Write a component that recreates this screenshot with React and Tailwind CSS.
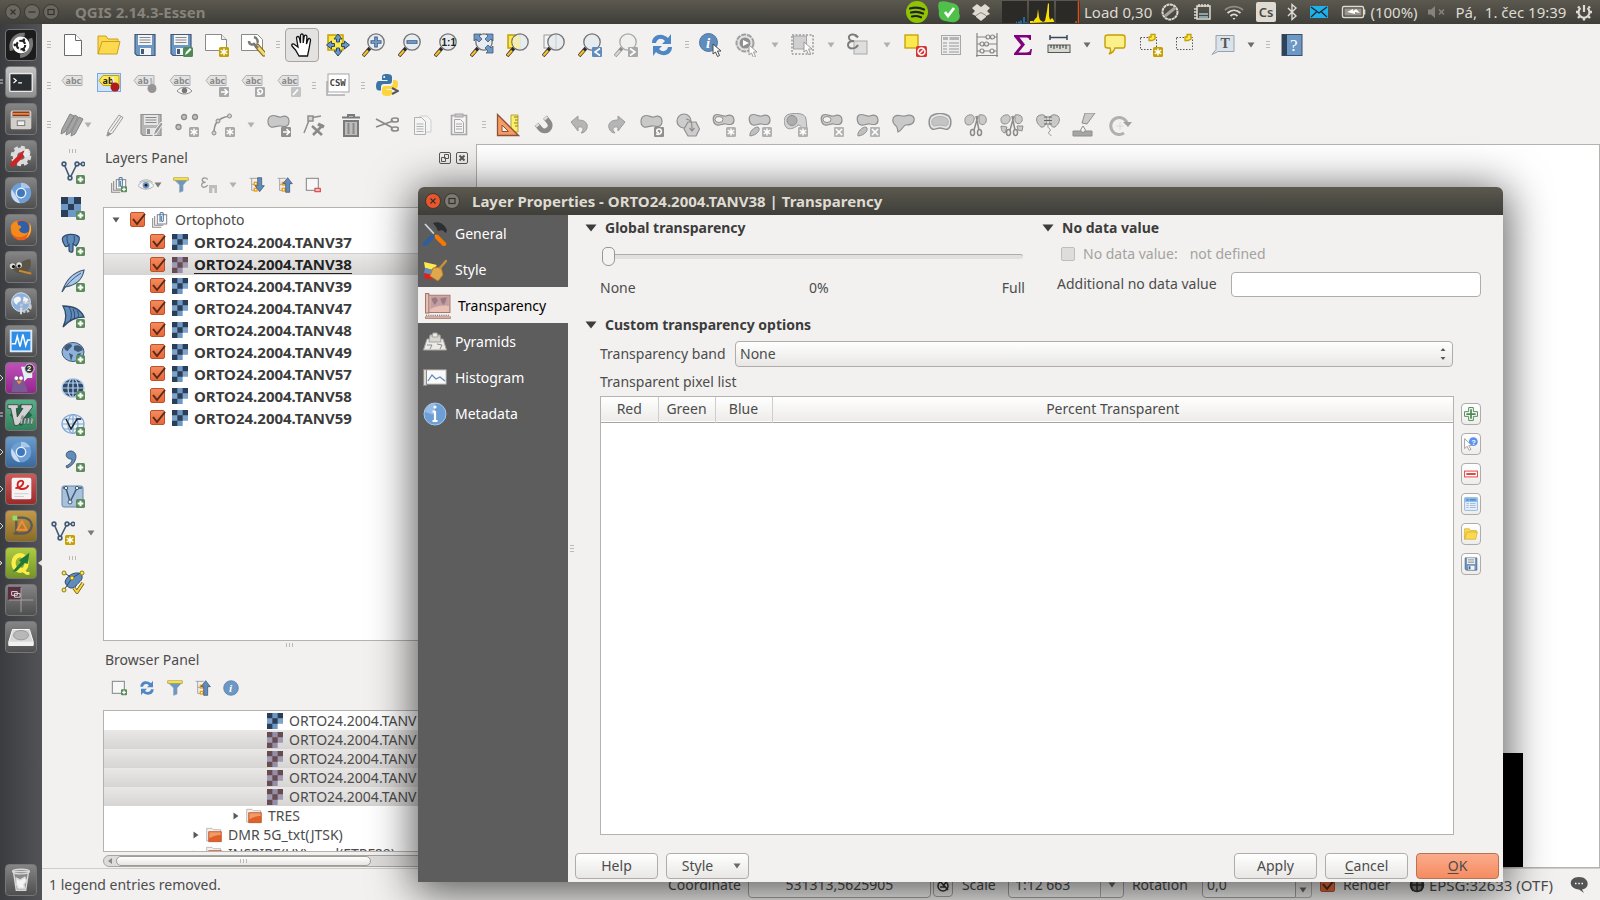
import React, { useState } from "react";

/* Shared icon parts, all on a 24x24 grid */

const PlusBadge = () => (
  <g>
    <rect x="15" y="14" width="9" height="9" rx="1.5" fill="#5a8c5a" />
    <path d="M19.5 15.7v5.6M16.7 18.5h5.6" stroke="#fff" strokeWidth="2" />
  </g>
);

const StarBadge = ({ fill = "#c4a000" }) => (
  <g>
    <rect x="14" y="14" width="10" height="10" rx="1.5" fill={fill} />
    <path d="M19 15.5v7M15.7 17.2l6.6 3.6M22.3 17.2l-6.6 3.6" stroke="#fff" strokeWidth="1.5" />
  </g>
);

const SquareBadge = ({ d, fill = "#a8a8a8" }) => (
  <g>
    <rect x="14" y="14" width="10" height="10" rx="1" fill={fill} />
    <path d={d} stroke="#fff" strokeWidth="1.6" fill="none" />
  </g>
);

const Blob = ({ small }) => (
  <path
    d={
      small
        ? "M3 2c4-2 7 2 11 1 5-2 8 0 8 4 0 5-4 5-8 4-3-1-6 2-9 1C1 11 0 4 3 2Z"
        : "M4 3c4-2 7 2 10 1 5-2 8 0 8 4 0 6-4 6-8 5-3-1-6 2-10 1C0 12 0 5 4 3Z"
    }
    fill="#c9c9c9"
    stroke="#8f8f8f"
    strokeWidth="1.2"
  />
);

const Lens = ({ gray, children }) => (
  <g>
    <path d="M1 23l7-8" stroke={gray ? "#8c8c8c" : "#2b2b2b"} strokeWidth="3.6" />
    <path d="M1.4 22.6l4.6-5.2" stroke={gray ? "#d8d8d8" : "#fcbf2a"} strokeWidth="2.2" />
    <circle cx="14" cy="9" r="8.2" fill={gray ? "#efefef" : "#e6ebf0"} fillOpacity="0.9" stroke={gray ? "#a8a8a8" : "#737373"} strokeWidth="1.3" />
    {children}
  </g>
);

const Tag = ({ text = "abc", fill = "#e3e3e3", color = "#8a8a8a", stroke = "#b0b0b0" }) => (
  <g>
    <path d="M1 7.5l4-5h16v10H5Z" fill={fill} stroke={stroke} />
    <text x="4.5" y="10.5" fontSize="9" fontWeight="700" fontFamily="Noto Sans, sans-serif" fill={color}>
      {text}
    </text>
  </g>
);

const Floppy = ({ fill = "#6d97c4", edge = "#415a75", plate = "#f4f4f4" }) => (
  <g>
    <path d="M2 1.5h20v21H4l-2-2Z" fill={fill} stroke={edge} strokeWidth="1.2" />
    <rect x="5" y="2" width="14" height="10" fill={plate} />
    <path d="M6.5 4.5h11M6.5 7h11M6.5 9.5h11" stroke="#8a8a8a" strokeWidth="1.2" />
    <rect x="7" y="15" width="11" height="7" fill={plate} />
    <rect x="8" y="16" width="3" height="5" fill={edge} />
  </g>
);

const Folder = () => (
  <g fill="#fcd94f" stroke="#c9a21c" strokeWidth="1">
    <path d="M1 21V3h8l2 3h10v4" />
    <path d="M1 21L5 8.500h18L20 21Z" />
  </g>
);

const Cursor = ({ x = 13, y = 11, gray }) => (
  <path
    transform={`translate(${x} ${y})`}
    d="M0 0v10l2.5-2 2 4.5 2-1-2-4.5H8Z"
    fill="#fff"
    stroke={gray ? "#9b9b9b" : "#4a4a4a"}
    strokeWidth="1"
  />
);

const Magnet = () => (
  <g fill="none" transform="rotate(140 13 12)">
    <path d="M8 18v-6a5.5 5.5 0 0 1 11 0v6" stroke="#8a8a8a" strokeWidth="5" />
    <path d="M8 18v-2.5M19 18v-2.5" stroke="#dcdcdc" strokeWidth="4" />
  </g>
);

const Scissors = () => (
  <g fill="none" stroke="#8a8a8a" strokeWidth="1.5">
    <path d="M12 3l3 14M14 3l-4 14" />
    <ellipse cx="8.5" cy="19.5" rx="2" ry="3" fill="#eee" />
    <ellipse cx="15.5" cy="19.5" rx="2" ry="3" fill="#eee" />
  </g>
);

const Raster = ({ dark = "#2b3e57", light = "#6d97c4" }) => (
  <g>
    <path d="M0 0h24v16h-8v8H0Z" fill={light} />
    <path d="M0 0h8v8H0ZM16 0h8v8h-8ZM8 8h8v8H8ZM0 16h8v8H0Z" fill={dark} />
    <path d="M0 8h8v8H0ZM16 8h8v8h-8Z" fill="#fff" fillOpacity="0.12" />
  </g>
);

const Nodes = () => (
  <g fill="#f2f1f0" stroke="#415a75" strokeWidth="1.6">
    <path d="M3 3l6 14L16 3h6" fill="none" />
    <circle cx="3" cy="3" r="1.9" />
    <circle cx="9" cy="17" r="1.9" />
    <circle cx="16" cy="3" r="1.9" />
    <circle cx="22" cy="3" r="1.7" />
  </g>
);

const Globe = ({ fill = "#9fc0e4", line = "#415a75" }) => (
  <g fill="none" stroke={line} strokeWidth="1.2">
    <ellipse cx="12" cy="11" rx="11" ry="9.5" fill={fill} />
    <ellipse cx="12" cy="11" rx="5" ry="9.5" />
    <path d="M1 11h22M3 6h18M3 16h18M12 1.5v19" />
  </g>
);

const Refresh = () => (
  <g fill="#4f86c6">
    <path d="M2 10C2 3 9 0 15 3c1 .5 2 1 3 2l3-4v10H12l3-3C11 4 7 6 6 10Z" />
    <path d="M22 14c0 7-7 10-13 7-1-.5-2-1-3-2l-3 4V13h9l-3 3c4 4 8 2 9-2Z" />
  </g>
);

const TreeLines = ({ children }) => (
  <g>
    <path d="M1 2h12M4 2v18h5M4 11h5" fill="none" stroke="#9a9a9a" strokeWidth="1.3" />
    <rect x="8" y="8" width="4" height="4" fill="#fff" stroke="#f59e0b" strokeWidth="2" />
    <rect x="8" y="17" width="4" height="4" fill="#fff" stroke="#f59e0b" strokeWidth="2" />
    {children}
  </g>
);

const Funnel = () => (
  <g>
    <path d="M1 3h22l-8 9v9l-5 2V12Z" fill="#6d97c4" stroke="#8a9bb0" />
    <path d="M1 1h22v4H1Z" fill="#fce94f" stroke="#a99a3a" />
  </g>
);

const InfoDot = () => (
  <g>
    <circle cx="12" cy="12" r="11" fill="#6d97c4" stroke="#4a76a8" />
    <text x="9" y="18" fontSize="17" fontWeight="700" fontStyle="italic" fontFamily="Liberation Serif, serif" fill="#fff">
      i
    </text>
  </g>
);

const Group = () => (
  <g fill="#fbfbfb" stroke="#8a8a8a" strokeWidth="1.6">
    <path d="M1 9v14h13" fill="none" />
    <path d="M4 6v14h13" fill="none" />
    <rect x="8" y="4" width="14" height="14" />
    <path d="M12 15V3c0-3 5-3 5 0v9c0 3-3 3-3 0V6" fill="none" stroke="#4f79a6" />
  </g>
);

const icons = {
  newFile: (
    <g fill="#fff" stroke="#6b6b6b">
      <path d="M3.5 1.5h11l6 6v15h-17Z" />
      <path d="M14.5 1.5v6h6" />
    </g>
  ),
  open: <Folder />,
  save: <Floppy />,
  saveAs: (
    <g>
      <Floppy />
      <rect x="14" y="14" width="10" height="10" rx="1.5" fill="#4e8a55" />
      <path d="M16 22l1-3 4-4 1.5 1.5-4 4Z" fill="#fff" />
    </g>
  ),
  composer: (
    <g>
      <path d="M.5 1.5h16l5 5v11H.5Z" fill="#fff" stroke="#8a8a8a" />
      <path d="M16.5 1.5v5h5" fill="#eee" stroke="#8a8a8a" />
      <StarBadge />
    </g>
  ),
  composerManager: (
    <g>
      <path d="M.5 1.5h16l5 5v11H.5Z" fill="#fff" stroke="#8a8a8a" />
      <path d="M16 13l7 8" stroke="#7a6520" strokeWidth="5" strokeLinecap="round" />
      <path d="M16 13l7 8" stroke="#f5d76a" strokeWidth="3" strokeLinecap="round" />
      <path d="M8 8c0 4 4 4 5 3l4 4M13 4c4 1 4 5 3 6" fill="none" stroke="#7a7a7a" strokeWidth="2.5" />
    </g>
  ),
  pan: (
    <path
      d="M9 23L5.5 17 2 13c-1-1.5 1-3 2.5-1.5L8 14 6.5 5c0-2 2.5-2 2.8 0L10.5 10V2.5c0-2 2.7-2 2.7 0V10l1-6.500c.3-2 2.8-1.6 2.7.3L16.5 11l1.5-4.5c.8-1.7 2.8-1 2.5.8L19 16l-1.5 7Z"
      fill="#fff"
      stroke="#111"
      strokeWidth="1.3"
    />
  ),
  panSelection: (
    <g>
      <rect x="2" y="2" width="15" height="15" fill="#fce94f" stroke="#c4a000" strokeWidth="1.5" />
      <path
        d="M12 1l4 5h-2.5v3h-3V6H8ZM12 23l4-5h-2.5v-3h-3v3H8ZM.5 12l5-4v2.5h3v3h-3V16ZM23.5 12l-5-4v2.5h-3v3h3V16Z"
        fill="#6d97c4"
        stroke="#2f4a68"
        strokeWidth="1"
      />
    </g>
  ),
  zoomIn: (
    <Lens>
      <path d="M14 3.5v11M8.5 9h11" stroke="#415f85" strokeWidth="3.6" />
      <path d="M14 4.5v9M9.5 9h9" stroke="#6d97c4" strokeWidth="2" />
    </Lens>
  ),
  zoomOut: (
    <Lens>
      <path d="M8.5 9h11" stroke="#415f85" strokeWidth="3.6" />
      <path d="M9.5 9h9" stroke="#6d97c4" strokeWidth="2" />
    </Lens>
  ),
  zoomNative: (
    <Lens>
      <text x="7.5" y="12.5" fontSize="10" fontWeight="700" fontFamily="Liberation Sans, sans-serif" fill="#222">
        1:1
      </text>
    </Lens>
  ),
  zoomFull: (
    <Lens>
      <path
        d="M4 1h7l-2 2 3 3-3 3-3-3-2 2ZM23 1h-7l2 2-3 3 3 3 3-3 2 2ZM23 20v-7l-2 2-3-3-3 3 3 3-2 2Z"
        fill="#6d97c4"
        stroke="#415a75"
        strokeWidth="0.8"
      />
    </Lens>
  ),
  zoomSelection: (
    <g>
      <rect x="2" y="2" width="12" height="13" fill="#fce94f" stroke="#c4a000" strokeWidth="1.5" />
      <Lens>
        <path d="M8 4h6v11H9C6 11 6 7 8 4Z" fill="#f5ecb0" />
      </Lens>
    </g>
  ),
  zoomLayer: (
    <g>
      <rect x="2" y="2" width="12" height="13" fill="#f4f4f4" stroke="#9a9a9a" />
      <Lens>
        <path d="M14 2v14" stroke="#cfcfcf" />
      </Lens>
    </g>
  ),
  zoomLast: (
    <g>
      <Lens />
      <SquareBadge d="M22 15.5l-5 3.5 5 3.5" fill="#5f8cbc" />
    </g>
  ),
  zoomNext: (
    <g>
      <Lens gray />
      <SquareBadge d="M16 15.5l5 3.5-5 3.5" />
    </g>
  ),
  refresh: <Refresh />,
  identify: (
    <g>
      <circle cx="9.5" cy="9.5" r="9" fill="#5f8cbc" stroke="#4a76a8" />
      <text x="7" y="15" fontSize="15" fontWeight="700" fontStyle="italic" fontFamily="Liberation Serif, serif" fill="#fff">
        i
      </text>
      <Cursor x={14} y={11} />
    </g>
  ),
  action: (
    <g>
      <circle cx="10" cy="10" r="8.5" fill="#e2e2e2" stroke="#a0a0a0" strokeWidth="2" strokeDasharray="5 1" />
      <circle cx="10" cy="10" r="5.5" fill="#8f8f8f" />
      <path d="M8 7l6 3-6 3Z" fill="#fff" />
      <Cursor x={14} y={12} gray />
    </g>
  ),
  select: (
    <g>
      <rect x="1" y="2" width="21" height="19" fill="none" stroke="#707070" strokeDasharray="2 1.5" />
      <rect x="2.5" y="3" width="13" height="13" fill="#d0d0d0" stroke="#a5a5a5" />
      <Cursor x={13} y={9} gray />
    </g>
  ),
  expression: (
    <g>
      <rect x="7" y="8" width="13" height="13" fill="#dedede" stroke="#a8a8a8" />
      <path d="M11 4C8 0 1 1 2 5c0 2 3 3 5 3-3 0-6 1-6 4 0 5 8 4 10 0M8 2.500l3 2" fill="none" stroke="#7c7c7c" strokeWidth="2" />
    </g>
  ),
  deselect: (
    <g>
      <rect x="2" y="2" width="13" height="13" fill="#fce94f" stroke="#c4a000" strokeWidth="1.3" />
      <rect x="13" y="13" width="11" height="11" rx="1.5" fill="#d83434" />
      <circle cx="18.5" cy="18.5" r="3.5" fill="none" stroke="#fff" strokeWidth="1.5" />
      <path d="M16 21l5-5" stroke="#fff" strokeWidth="1.5" />
    </g>
  ),
  table: (
    <g>
      <rect x="2.5" y="2.5" width="19" height="19" fill="#ededed" stroke="#a8a8a8" />
      <path d="M4 5.5h5M10.5 5.5h9.5" stroke="#b4b4b4" strokeWidth="3" />
      <path d="M4 10h4M10 10h10M4 13h4M10 13h10M4 16h4M10 16h10M4 19h4M10 19h10" stroke="#b4b4b4" strokeWidth="1.3" />
    </g>
  ),
  abacus: (
    <g fill="#f2f1f0" stroke="#858585" strokeWidth="1.2">
      <path d="M2 0v24M22 0v24M1 22.5h22M2 4h20M2 11h20M2 18h20" />
      <circle cx="13" cy="4" r="2" /><circle cx="17.5" cy="4" r="2" />
      <circle cx="7" cy="11" r="2" /><circle cx="11.5" cy="11" r="2" />
      <circle cx="7" cy="18" r="2" /><circle cx="17" cy="18" r="2" />
    </g>
  ),
  sigma: (
    <path d="M3 2h17v5h-1.5C18 5 17 4.5 14 4.500H8.5l5.5 7-6.5 8H15c3 0 4-1 4.5-3.500H21L20 22H3v-1.5l7-8.5-7-8.5Z" fill="#800080" />
  ),
  measure: (
    <g>
      <path d="M3 4.5h17M3 2v5M20 2v5" stroke="#34495e" strokeWidth="1.5" />
      <rect x="1" y="12" width="22" height="7.5" fill="#d5d9d0" stroke="#555" />
      <path d="M4 12v3M7 12v4M10 12v3M13 12v4M16 12v3M19 12v4" stroke="#333" />
    </g>
  ),
  tips: (
    <path d="M5 2h14c3 0 3 1 3 3v7c0 3-1 3-3 3h-7c-1 4-3 5-6 6 2-2 2-4 1-6H5c-3 0-3-1-3-3V5c0-2 0-3 3-3Z" fill="#fbf08a" stroke="#c4a000" strokeWidth="1.4" />
  ),
  newBookmark: (
    <g>
      <rect x="1.5" y="4.5" width="16" height="12" fill="none" stroke="#555" strokeDasharray="1.5 1.5" />
      <path d="M10 4h2V1.5h4V6l-3 1.5h-3Z" fill="#fce94f" stroke="#c4a000" strokeWidth="1.3" />
      <StarBadge />
    </g>
  ),
  bookmarks: (
    <g>
      <rect x="1.5" y="4.5" width="16" height="12" fill="none" stroke="#555" strokeDasharray="1.5 1.5" />
      <path d="M10 4h2V1.5h4V6l-3 1.5h-3Z" fill="#fce94f" stroke="#c4a000" strokeWidth="1.3" />
    </g>
  ),
  annotation: (
    <g>
      <path d="M5 2.5h18v16H7l-6 3 4-5Z" fill="#dae3ec" stroke="#9aa3ad" />
      <text x="9.5" y="15" fontSize="14" fontWeight="700" fontFamily="Liberation Serif, serif" fill="#555">
        T
      </text>
    </g>
  ),
  help: (
    <g>
      <rect x="2" y="1.5" width="20" height="21" fill="#6d97c4" stroke="#3a4f66" />
      <rect x="2" y="1.5" width="5" height="21" fill="#2f4256" />
      <text x="10" y="18" fontSize="17" fontFamily="Liberation Serif, serif" fill="#fff">
        ?
      </text>
    </g>
  ),
  label: <Tag />,
  pinLabels: (
    <g>
      <rect x="0.5" y="0.5" width="23" height="18" fill="#cfe3fa" stroke="#7aaae0" />
      <g transform="translate(1 0)">
        <Tag text="ab" fill="#fce94f" color="#222" stroke="#c4a000" />
      </g>
      <path d="M17 13l-1-9" stroke="#eee" strokeWidth="2" />
      <circle cx="18" cy="14" r="4.5" fill="#b01c1c" />
    </g>
  ),
  pin: (
    <g>
      <Tag text="ab" />
      <path d="M19 14l-1-9" stroke="#b5b5b5" strokeWidth="2" />
      <circle cx="19" cy="15.5" r="4.5" fill="#959595" />
    </g>
  ),
  showLabels: (
    <g>
      <Tag />
      <path d="M8 18c4-5 11-5 15 0-4 4-11 4-15 0Z" fill="#f5f5f5" stroke="#8a8a8a" />
      <circle cx="15.5" cy="17.5" r="2.7" fill="#777" />
    </g>
  ),
  moveLabel: (
    <g>
      <Tag />
      <SquareBadge d="M16 19h6M19.5 16l3 3-3 3" />
    </g>
  ),
  rotateLabel: (
    <g>
      <Tag />
      <SquareBadge d="M16 21c6 2 7-5 3-5-3 0-3 4 0 3.5" />
    </g>
  ),
  changeLabel: (
    <g>
      <Tag />
      <SquareBadge d="M16 22l5-5.5" fill="#c4c4c4" />
    </g>
  ),
  csw: (
    <g>
      <path d="M1 8v14h18" fill="#fff" stroke="#aaa" strokeWidth="1.5" />
      <rect x="2" y="1" width="21" height="18" fill="#fff" stroke="#a5a5a5" />
      <text x="3.5" y="13" fontSize="9" fontWeight="700" fontFamily="DejaVu Sans Mono, monospace" fill="#444">
        CSW
      </text>
    </g>
  ),
  python: (
    <g>
      <path d="M11.5 1C8 1 7 2 7 4v3h5.5v1H4C2 8 1 10 1 13s1 4.5 3 4.5h2V14c0-2 1-3 3-3h5c2 0 3-1 3-3V4c0-2-1.5-3-5.5-3Z" fill="#3b75a8" />
      <circle cx="9.2" cy="4" r="1" fill="#fff" />
      <path d="M12.5 23c3.5 0 4.5-1 4.5-3v-3h-5.5v-1H20c2 0 3-2 3-5s-1-4-3-4h-2v3c0 2-1 3-3 3h-5c-2 0-3 1-3 3v4c0 2 1.5 3 5.5 3Z" fill="#fcd53f" />
      <path d="M17 15l6 3-6 3" fill="none" stroke="#555" strokeWidth="2" />
    </g>
  ),
  pencil: (
    <g fill="#efefef" stroke="#9b9b9b">
      <path d="M4 23l1.5-6L16 2l4 2.500L9.5 20Z" />
      <path d="M7.5 18.5L18 3.5" />
      <path d="M4 23l1-4 3 2Z" fill="#8a8a8a" />
    </g>
  ),
  saveEdits: (
    <g>
      <Floppy fill="#b5b5b5" edge="#8f8f8f" plate="#e6e6e6" />
      <path d="M14 23l2-6 6-8 2 2-6 9Z" fill="#9a9a9a" stroke="#f2f1f0" />
    </g>
  ),
  addPoints: (
    <g>
      <g fill="#c2c2c2" stroke="#8c8c8c" strokeWidth="1.3">
        <circle cx="9" cy="4" r="2.5" /><circle cx="20" cy="4" r="2.5" /><circle cx="3.5" cy="14" r="2.5" />
      </g>
      <StarBadge fill="#a8a8a8" />
    </g>
  ),
  addCurve: (
    <g>
      <path d="M3 20C3 12 5 5 19 3" fill="none" stroke="#8f8f8f" strokeWidth="1.5" />
      <g fill="#d2d2d2" stroke="#8c8c8c">
        <circle cx="3" cy="20" r="2" /><circle cx="7" cy="8" r="2" /><circle cx="18.5" cy="3" r="2" />
      </g>
      <StarBadge fill="#a8a8a8" />
    </g>
  ),
  moveFeature: (
    <g>
      <Blob />
      <SquareBadge d="M16 19h6M19.5 16l3 3-3 3" fill="#8f8f8f" />
    </g>
  ),
  nodeTool: (
    <g stroke="#8f8f8f" strokeWidth="1.5" fill="#d2d2d2">
      <path d="M1 20L7 5l11-2" fill="none" />
      <rect x="5" y="3" width="5" height="5" />
      <path d="M9 13l10 9M20 12L10 22" strokeWidth="2.6" stroke="#8a8a8a" />
      <path d="M15 11l6 3" strokeWidth="3.5" stroke="#8a8a8a" />
    </g>
  ),
  trash: (
    <g fill="none" stroke="#7a7a7a" strokeWidth="2">
      <path d="M3 4.5h18M9 4V2h6v2" />
      <path d="M5 8h14v15H5Z" fill="#bcbcbc" />
      <path d="M9.5 10v11M14.5 10v11" stroke="#8a8a8a" />
    </g>
  ),
  cut: (
    <g fill="none" stroke="#8a8a8a" strokeWidth="1.7">
      <path d="M1 6l17 9M1 14l17-6" />
      <ellipse cx="20" cy="7" rx="3.5" ry="2" />
      <ellipse cx="20" cy="16" rx="3.5" ry="2" />
    </g>
  ),
  copy: (
    <g fill="#f4f4f4" stroke="#b0b0b0">
      <path d="M9 3h7l4 4v12H9Z" stroke="#cfcfcf" />
      <path d="M3.5 4.5h7l4 4v13h-11Z" />
      <path d="M5.5 11h7M5.5 13.5h7M5.5 16h7M5.5 18.5h7" />
    </g>
  ),
  paste: (
    <g fill="#f4f4f4" stroke="#a8a8a8">
      <rect x="4.5" y="2.5" width="15" height="19" strokeWidth="1.6" />
      <rect x="8" y="1" width="8" height="3" fill="#c8c8c8" />
      <path d="M7.5 6.5h6l3 3v10h-9ZM9 11h6M9 13.5h6M9 16h6" />
    </g>
  ),
  advanced: (
    <g>
      <path d="M15 2h7v17h-7Z" fill="#fbee6a" stroke="#b8a53c" />
      <path d="M18 4h4M19 7h3M18 10h4M19 13h3" stroke="#8a7a20" />
      <path d="M1.5 1.5l21 21h-21Z" fill="#f79a63" stroke="#8a5236" strokeWidth="1.3" />
      <path d="M6 12l6.5 6.500H6Z" fill="#f2f1f0" stroke="#8a5236" />
    </g>
  ),
  snap: <Magnet />,
  undo: <path d="M3 9l7-6v4c8 0 10 4 9 8-1 3-3 5-6 5 3-3 3-7-3-6v4Z" fill="#b5b5b5" stroke="#9b9b9b" />,
  redo: <path d="M21 9l-7-6v4c-8 0-10 4-9 8 1 3 3 5 6 5-3-3-3-7 3-6v4Z" fill="#b5b5b5" stroke="#9b9b9b" />,
  rotateFeature: (
    <g>
      <Blob />
      <SquareBadge d="M16 21c6 2 7-5 3-5-3 0-3 4 0 3.5" fill="#8f8f8f" />
    </g>
  ),
  simplify: (
    <g fill="#cdcdcd" stroke="#8f8f8f" strokeWidth="1.2">
      <circle cx="8" cy="8" r="7" />
      <path d="M12 9h8l3.5 7-3.5 7h-8l-4-7Z" />
      <path d="M10 6c6 1 6 4 6 11M13.5 15l2.5 3 2.5-3" fill="none" />
    </g>
  ),
  addRing: (
    <g>
      <Blob small />
      <ellipse cx="7" cy="6.5" rx="4" ry="3" fill="#f2f1f0" stroke="#8f8f8f" />
      <StarBadge fill="#b0b0b0" />
    </g>
  ),
  addPart: (
    <g>
      <Blob small />
      <path d="M2 23c-1-4 4-9 8-9 3 2 0 8-8 9Z" fill="#c0c0c0" stroke="#8f8f8f" />
      <StarBadge fill="#b0b0b0" />
    </g>
  ),
  fillRing: (
    <g>
      <path d="M3 2c7-3 19-2 19 4l1 10c-5 2-5-4-9-4-4 4-10 5-12 2C-1 10 0 4 3 2Z" fill="#d2d2d2" stroke="#9b9b9b" />
      <circle cx="8" cy="7.5" r="5" fill="#adadad" stroke="#8f8f8f" />
      <StarBadge fill="#b0b0b0" />
    </g>
  ),
  deleteRing: (
    <g>
      <Blob small />
      <ellipse cx="7" cy="6.5" rx="4" ry="3" fill="#f2f1f0" stroke="#8f8f8f" />
      <SquareBadge d="M16 16l6 6M22 16l-6 6" fill="#b5b5b5" />
    </g>
  ),
  deletePart: (
    <g>
      <Blob small />
      <path d="M2 23c-1-4 4-9 8-9 3 2 0 8-8 9Z" fill="#c0c0c0" stroke="#8f8f8f" />
      <SquareBadge d="M16 16l6 6M22 16l-6 6" fill="#b5b5b5" />
    </g>
  ),
  reshape: (
    <path d="M3 3c4-2 7 1 10 0 6-2 10 0 9 5-1 4-5 4-8 4-3 0-4 6-8 7-1-4 0-5-3-7-3-3-3-7 0-9Z" fill="#c9c9c9" stroke="#8f8f8f" strokeWidth="1.2" />
  ),
  offset: (
    <g stroke="#8f8f8f" fill="#e4e4e4">
      <path d="M5 2c4-2 10-2 14 0 5 2 5 11 1 14-3 1-5-1-8-1s-5 2-8 1C0 13 0 4 5 2Z" strokeWidth="1.4" />
      <path d="M6 5c4-2 8-2 12 0 3 1 3 7 0 8-2 0-4-1-6-1s-4 1-6 1C3 12 3 6 6 5Z" fill="#c4c4c4" stroke="#b0b0b0" />
    </g>
  ),
  split: (
    <g>
      <path d="M3 3c5-3 8 0 7 4-1 5-6 6-8 4-2-3-1-7 1-8ZM15 2c6-1 8 2 7 7-2 4-6 3-7 0Z" fill="#c9c9c9" stroke="#8f8f8f" />
      <Scissors />
    </g>
  ),
  splitParts: (
    <g>
      <path d="M3 3c5-3 8 0 7 4-1 4-6 5-8 3-2-3-1-6 1-7ZM15 2c6-1 8 2 7 6-2 4-6 3-7 0ZM1 13l6 1-2 6c-3 0-4-4-4-7ZM17 13l6 0-1 5-4-1Z" fill="#c9c9c9" stroke="#8f8f8f" />
      <Scissors />
    </g>
  ),
  merge: (
    <g fill="#c9c9c9" stroke="#8f8f8f">
      <path d="M2 3c5-3 9 0 9 4s-3 8-6 7C1 11-1 6 2 3ZM22 3c-5-3-9 0-9 4s3 8 6 7c4-3 6-8 3-11Z" />
      <path d="M8 4h8M8 7.5h8M8 11h8" stroke="#666" />
      <path d="M12 12c-1 5 5 3 1 7-2 2 2 2 2 4" fill="none" />
    </g>
  ),
  mergeAttributes: (
    <g fill="#c9c9c9" stroke="#8f8f8f">
      <path d="M1 18h19v5H1Z" fill="#a5a5a5" />
      <path d="M10 10l3-10h10l-8 11Z" />
      <path d="M11 13l2.5 4-2.5 3-2.5-3Z" fill="#f4f4f4" />
    </g>
  ),
  rotateSymbols: (
    <g>
      <path d="M16 20a8.5 8.5 0 1 1 3.5-9" fill="none" stroke="#b0b0b0" strokeWidth="3" />
      <path d="M15 9h9l-4 5Z" fill="#a0a0a0" />
      <path d="M12 9v8M8 13h8" stroke="#dadada" />
    </g>
  ),
  vector: (
    <g>
      <Nodes />
      <PlusBadge />
    </g>
  ),
  raster: (
    <g>
      <path d="M0 0h20v20H0Z" fill="#6d97c4" />
      <path d="M0 0h7v7H0ZM13 0h7v7h-7ZM7 7h6v6H7ZM0 13h7v7H0Z" fill="#2b3e57" />
      <PlusBadge />
    </g>
  ),
  postgis: (
    <g>
      <path d="M2 4c3-3 12-4 16 0 1 3-1 7-3 9l-3-2v6c0 3-4 3-4 0v-5c-2 2-3 2-4 1C2 10 0 7 2 4Z" fill="#5f8cbc" stroke="#2f4a68" strokeWidth="1.2" />
      <path d="M6 3c0 4 0 7 2 9M13 3c1 4 0 6-1 8" fill="none" stroke="#2f4a68" />
      <PlusBadge />
    </g>
  ),
  spatialite: (
    <g>
      <path d="M1 23C4 14 9 4 23 1c-1 8-7 15-19 17Z" fill="#a9c8ea" stroke="#415a75" strokeWidth="1.2" />
      <path d="M1 23C6 15 12 9 20 4" fill="none" stroke="#415a75" />
      <PlusBadge />
    </g>
  ),
  mssql: (
    <g>
      <path d="M2 1c10 0 18 4 21 11-8 0-15 3-21 10 4-8 4-14 0-21Z" fill="#5f8cbc" stroke="#2f4a68" strokeWidth="1.3" />
      <path d="M8 2c3 5 3 9 1 14M12 4c2 4 2 7 1 10M16 6c2 3 2 4 1 6" fill="none" stroke="#2f4a68" />
      <PlusBadge />
    </g>
  ),
  wms: (
    <g>
      <ellipse cx="12" cy="11" rx="11" ry="9.5" fill="#8db3dd" stroke="#415a75" />
      <path d="M3 7c2-4 6-5 8-3 0 3-3 3-4 6-2 0-3-1-4-3ZM13 5c4-2 8 0 9 4l-5 2-4-2ZM8 12l4 2-2 6ZM16 13l4-1-2 5Z" fill="#415a75" />
      <PlusBadge />
    </g>
  ),
  wcs: (
    <g>
      <Globe fill="#2f4a68" line="#b9d2ee" />
      <PlusBadge />
    </g>
  ),
  wfs: (
    <g>
      <Globe fill="#e8f0f9" line="#7fa6d2" />
      <path d="M5 6l5 10L16 6h4" fill="none" stroke="#222" strokeWidth="1.5" />
      <PlusBadge />
    </g>
  ),
  csv: (
    <g>
      <path d="M5 17c5-2 6-5 6-7-7 1-8-8-1-8 8 1 6 13-4 17Z" fill="#5f8cbc" stroke="#415a75" />
      <PlusBadge />
    </g>
  ),
  virtual: (
    <g>
      <rect x="1" y="1" width="21" height="21" rx="2" fill="#a8c2de" stroke="#6a86a5" />
      <path d="M2 3h3l4 14L16 3h5" fill="none" stroke="#415a75" strokeWidth="1.5" />
      <g fill="#f2f1f0" stroke="#415a75">
        <circle cx="5" cy="3" r="1.7" /><circle cx="16" cy="3" r="1.7" /><circle cx="9" cy="17" r="2" />
      </g>
      <PlusBadge />
    </g>
  ),
  newVector: (
    <g>
      <Nodes />
      <StarBadge />
    </g>
  ),
  topology: (
    <g>
      <path d="M4 12C6 3 20 0 21 6c1 5-4 6-6 10-4 4-9 2-11-4Z" fill="#5f8cbc" stroke="#2f4a68" />
      <path d="M2 2l9 6 10-6M11 8L3 20" fill="none" stroke="#2f4a68" />
      <g fill="#fce94f" stroke="#8a7a20">
        <circle cx="3" cy="3" r="2" /><circle cx="21" cy="3" r="2" /><circle cx="11" cy="8" r="2" /><circle cx="3" cy="20" r="2" />
      </g>
      <path d="M13 18l3 4 6-9" fill="none" stroke="#6b5a10" strokeWidth="3.5" />
      <path d="M13 18l3 4 6-9" fill="none" stroke="#fcd53f" strokeWidth="2" />
    </g>
  ),
  group: <Group />,
  addGroup: (
    <g>
      <Group />
      <PlusBadge />
    </g>
  ),
  eye: (
    <g>
      <path d="M0 13C6 4 18 4 24 13 18 20 6 20 0 13Z" fill="#f4f4f4" stroke="#a5a5a5" strokeWidth="1.3" />
      <path d="M2 8C8 3 16 3 22 8" fill="none" stroke="#a5a5a5" strokeWidth="1.3" />
      <circle cx="12" cy="12.5" r="5" fill="#6d97c4" />
      <circle cx="12" cy="12.5" r="2.2" fill="#222" />
    </g>
  ),
  funnel: <Funnel />,
  epsilonFilter: (
    <g>
      <path d="M10 4C8 0 1 1 2 5c0 2 3 3 5 3-3 0-6 1-6 4 0 5 7 4 9 0" fill="none" stroke="#9b9b9b" strokeWidth="2" />
      <path d="M12 12h12v12h-4v-7h-3v7h-5Z" fill="#bdbdbd" />
    </g>
  ),
  expandAll: (
    <TreeLines>
      <path d="M13 1h6v12h4l-7 9-7-9h4Z" fill="#5f8cbc" stroke="#2f4a68" />
    </TreeLines>
  ),
  collapseAll: (
    <TreeLines>
      <path d="M13 23h6V10h4l-7-9-7 9h4Z" fill="#5f8cbc" stroke="#2f4a68" />
    </TreeLines>
  ),
  removeLayer: (
    <g>
      <rect x="2" y="2" width="18" height="18" fill="#f7f7f7" stroke="#8a8a8a" strokeWidth="1.6" />
      <rect x="14" y="16" width="10" height="7" rx="1" fill="#e05252" />
      <path d="M16 19.5h6" stroke="#fff" strokeWidth="2" />
    </g>
  ),
  addLayer: (
    <g>
      <rect x="2" y="2" width="18" height="18" fill="#f7f7f7" stroke="#8a8a8a" strokeWidth="1.6" />
      <PlusBadge />
    </g>
  ),
  info: <InfoDot />,
  rasterLayer: <Raster />,
  rasterSelected: <Raster dark="#664c50" light="#958ea8" />,
  browserFolder: (
    <g>
      <path d="M1 21V2h8l2 2h11v17Z" fill="#f4f1ee" stroke="#a5a09a" />
      <path d="M4 7h19v15H4Z" fill="#e0622a" stroke="#b8441a" />
      <path d="M5 8h17v4c-7 0-12 2-17 5Z" fill="#f29a68" />
    </g>
  ),
  addRow: (
    <g fill="none">
      <path d="M8 1h8v7h7v8h-7v7H8v-7H1V8h7Z" stroke="#4e8a55" strokeWidth="1.7" fill="#fff" />
      <path d="M12 4v16M4 12h16" stroke="#4e8a55" strokeWidth="3" />
    </g>
  ),
  pickRow: (
    <g>
      <circle cx="16" cy="8" r="7.5" fill="#5b8ff0" />
      <text x="12.5" y="13" fontSize="13" fontWeight="700" fontFamily="Liberation Sans, sans-serif" fill="#fff">
        ?
      </text>
      <path d="M1 3v17l4-4 4 7 3-2-4-6 5-1Z" fill="#fff" stroke="#8a8a8a" strokeWidth="1.3" />
    </g>
  ),
  removeRow: (
    <g>
      <rect x="1" y="7" width="22" height="10" fill="#fff" stroke="#e04848" strokeWidth="1.7" />
      <path d="M4 12h16" stroke="#e04848" strokeWidth="3.5" />
    </g>
  ),
  defaultRows: (
    <g>
      <rect x="1" y="1" width="22" height="22" rx="1" fill="#e6f0fa" stroke="#8db3dd" strokeWidth="1.5" />
      <path d="M1 5h22" stroke="#8dbbe8" strokeWidth="7" />
      <path d="M4 5h4M10 5h10" stroke="#4a7db0" strokeWidth="2" />
      <path d="M4 11h4M10 11h10M4 14.5h4M10 14.5h10M4 18h4M10 18h10" stroke="#9ab8d8" strokeWidth="1.6" />
    </g>
  ),
  general: (
    <g>
      <path d="M2 2l12 13" stroke="#d0d4d8" strokeWidth="1.8" />
      <path d="M14 15l7 7" stroke="#f57900" strokeWidth="4.5" strokeLinecap="round" />
      <path d="M17 7L9 15" stroke="#6a5a4a" strokeWidth="2" />
      <path d="M9 15l-7 7" stroke="#2f5e9e" strokeWidth="4.5" strokeLinecap="round" />
      <path d="M10 1c5-2 11 0 14 7l-1 3-4-3-4 1-2-4Z" fill="#2b2f33" />
    </g>
  ),
  style: (
    <g>
      <path d="M1 4l13 3-4 5-8-2Z" fill="#fce94f" />
      <path d="M2 10l9 2-3 5-7-2Z" fill="#5f8cbc" />
      <path d="M1 15l9 2 3 4-11 0Z" fill="#e02020" />
      <path d="M10 10l8-1 2 8-5 6-8-5Z" fill="#e0a84e" stroke="#b27a2a" />
      <path d="M17 10l6-7" stroke="#c98f3a" strokeWidth="2.5" strokeLinecap="round" />
    </g>
  ),
  transparency: (
    <g>
      <path d="M2 2h21v16H2Z" fill="#e8bfb2" stroke="#a5776c" />
      <path d="M5 3h17v9c-7-1-12 0-17 3Z" fill="#a5889a" fillOpacity="0.6" />
      <path d="M6 5l4-1 2 3-3 4-2-3ZM14 5l6-1-1 4-2 3-2-3Z" fill="#8c6a72" fillOpacity="0.7" />
      <rect x="0.5" y="0.5" width="3" height="18" fill="#e8c4b8" stroke="#a5776c" />
      <path d="M1 20.5h22" stroke="#555" strokeDasharray="1 1" />
      <rect x="0.5" y="22" width="23" height="1.5" fill="#e8bfb2" stroke="#a5776c" strokeWidth="0.7" />
    </g>
  ),
  pyramids: (
    <g fill="#eceae6" stroke="#a5a5a0">
      <path d="M4 9h16l3.5 11H.5Z" />
      <path d="M7 5h10l1 7H6Z" fill="#d8d6d0" />
      <path d="M10 3h4l1 4H9Z" />
      <path d="M4 15h5l-2 4M14 14l5 1-2 4" fill="none" stroke="#8c8c88" />
    </g>
  ),
  histogram: (
    <g>
      <rect x="2" y="4" width="21" height="14" fill="#fafafa" stroke="#c4c4c0" />
      <rect x="0.5" y="3.5" width="3" height="16" fill="#d8d8d4" stroke="#8c8c88" />
      <path d="M5 15l4-6 4 4 4-2 5 4" fill="none" stroke="#5f8cbc" strokeWidth="1.3" />
    </g>
  ),
  metadata: (
    <g>
      <circle cx="12" cy="12" r="11" fill="#6d9fd6" stroke="#a9c8ea" />
      <path d="M2 10C3 4 8 1 12 1v12C8 12 5 11 2 10Z" fill="#a9c8ea" fillOpacity="0.7" />
      <path d="M12 9v10M9.5 9.500H12M9.5 19h5" stroke="#fff" strokeWidth="2.2" fill="none" />
      <circle cx="12" cy="5" r="1.6" fill="#fff" />
    </g>
  ),
};

const Icon = ({ name, className = "size-6" }) => (
  <svg viewBox="0 0 24 24" className={`${className} shrink-0`} aria-hidden="true">
    {icons[name]}
  </svg>
);

const Arrow = ({ className = "text-[#8f8f8f]" }) => (
  <svg viewBox="0 0 8 6" className={`w-2 h-1.5 shrink-0 ${className}`} aria-hidden="true">
    <path d="M0.5 0.5h7L4 5.5Z" fill="currentColor" />
  </svg>
);

const Grip = ({ vertical }) => (
  <span className={vertical ? "flex gap-0.5 justify-center" : "flex flex-col gap-0.5 w-[13px] items-center"}>
    {[0, 1, 2].map((i) => (
      <i key={i} className={vertical ? "w-px h-1 bg-[#bdbab6]" : "h-px w-1 bg-[#bdbab6]"} />
    ))}
  </span>
);

const ToolBar = ({ items, height = "h-10" }) => (
  <div className={`flex items-center ${height}`} role="toolbar">
    {items.map((item, i) => {
      if (item === "|") return <Grip key={i} />;
      if (item === "v" || item === "V")
        return (
          <button key={i} aria-label="More" className="w-5 h-9 flex items-center justify-center">
            <Arrow className={item === "V" ? "text-[#6b6b6b]" : "text-[#b0b0b0]"} />
          </button>
        );
      if (item === "pencils")
        return (
          <button key={i} aria-label={item} className="w-[42px] h-9 flex items-center pl-[5px]">
            <svg viewBox="0 0 24 24" className="size-6 shrink-0">
              <g fill="#a5a5a5" stroke="#858585">
                <path d="M1 21l1-5L10 1l4 2L5 19Z" />
                <path d="M6 22l1-5L15 2l3 2L10 20Z" />
                <path d="M11 23l1-5L19 4l4 2-8 15Z" />
              </g>
            </svg>
            <Arrow className="text-[#b0b0b0]" />
          </button>
        );
      return (
        <button
          key={i}
          aria-label={item}
          className={
            item === "pan"
              ? "w-[34px] h-[34px] mx-px flex items-center justify-center rounded-sm border border-[#a8a5a1] bg-[#e4e2e0]"
              : "w-9 h-9 flex items-center justify-center"
          }
        >
          <Icon name={item} />
        </button>
      );
    })}
  </div>
);

const fileBar = [
  "|", "newFile", "open", "save", "saveAs", "composer", "composerManager",
  "|", "pan", "panSelection", "zoomIn", "zoomOut", "zoomNative", "zoomFull", "zoomSelection", "zoomLayer", "zoomLast", "zoomNext", "refresh",
  "|", "identify", "action", "v", "select", "v", "expression", "v", "deselect", "table", "abacus", "sigma", "measure", "V",
  "tips", "newBookmark", "bookmarks", "annotation", "V", "|", "help",
];
const labelBar = ["|", "label", "pinLabels", "pin", "showLabels", "moveLabel", "rotateLabel", "changeLabel", "|", "csw", "|", "python"];
const editBar = [
  "|", "pencils", "pencil", "saveEdits", "addPoints", "addCurve", "v", "moveFeature", "nodeTool", "trash", "cut", "copy", "paste",
  "|", "advanced", "snap", "undo", "redo", "rotateFeature", "simplify", "addRing", "addPart", "fillRing", "deleteRing", "deletePart",
  "reshape", "offset", "split", "splitParts", "merge", "mergeAttributes", "rotateSymbols",
];
const layerBar = ["vector", "raster", "postgis", "spatialite", "mssql", "wms", "wcs", "wfs", "csv", "virtual"];
const layers = ["37", "38", "39", "47", "48", "49", "57", "58", "59"];

/* Window buttons */
const WinButton = ({ kind, tone }) => (
  <button aria-label={kind} className="size-4">
    <svg viewBox="0 0 16 16" className="size-4">
      <circle cx="8" cy="8" r="7.5" fill={tone === "red" ? "#e9562d" : tone === "mid" ? "#7c7a72" : "#6a6860"} stroke="#3a3934" />
      <g stroke="#33322e" strokeWidth="1.2" fill="none">
        {kind === "close" && <path d="M5.5 5.5l5 5M10.5 5.5l-5 5" />}
        {kind === "minimize" && <path d="M4.5 8h7" />}
        {kind === "maximize" && <rect x="5" y="5.5" width="6" height="5" />}
      </g>
    </svg>
  </button>
);

const TopBar = () => (
  <header className="h-6 flex items-center bg-linear-to-b from-[#5b594f] to-[#3f3e39] text-[15px] leading-6 text-[#dfdbd2]">
    <div className="flex gap-[3px] pl-[5px]">
      <WinButton kind="close" />
      <WinButton kind="minimize" />
      <WinButton kind="maximize" />
    </div>
    <h1 className="pl-4 font-bold text-[15px] text-[#87837a]">QGIS 2.14.3-Essen</h1>
    <div className="ml-auto flex items-center h-6 whitespace-pre">
      <svg viewBox="0 0 32 24" className="w-8 h-6">
        <circle cx="16" cy="12" r="11" fill="#8fc400" />
        <path d="M9 8.5c5-1.5 10-1 14 1M10 12.5c4-1 8-1 12 1M11 16.5c3-1 6-.5 9 .8" stroke="#222" strokeWidth="2.2" fill="none" strokeLinecap="round" />
      </svg>
      <svg viewBox="0 0 32 24" className="w-8 h-6">
        <path d="M6 2c5-2 9 0 13 1 6 1 8 5 7 10 2 4 0 8-4 9-4 1-7-1-10-1-5-1-7-5-6-10-1-3-1-7 0-9Z" fill="#4fc04a" />
        <path d="M12 12l3 4 6-8" stroke="#fff" strokeWidth="2.8" fill="none" />
      </svg>
      <svg viewBox="0 0 32 24" className="w-8 h-6">
        <path d="M12 4l4 3 4-3 5 4-3 3 3 3-4 2v1l-5 4-5-4v-1l-4-2 3-3-3-3Z" fill="#dfdbd2" />
        <path d="M11 15.5l5-3 5 3" stroke="#8a877e" fill="none" />
      </svg>
      <svg viewBox="0 0 85 24" className="w-[85px] h-6">
        <path d="M5 1h25v22H5ZM32 1h25v22H32ZM59 1h24v22H59Z" fill="#2b2a26" />
        <path d="M19 22.5h1M21 22.5h2M24 20.5v3M27 17v6M29 22v1" stroke="#1c7fd0" strokeWidth="1.5" />
        <path d="M33 23v-2h3v1l2-3 2-2 1-8 1 8 1 3 3 2 2-1 2-10 1-8 1 1v12l1 4 2-2 1 1 1 2v1Z" fill="#fce100" />
        <path d="M79 23v-2M81.5 23V1" stroke="#d6501e" strokeWidth="1.5" />
      </svg>
      <span className="w-[72px] pl-0.5">Load 0,30</span>
      <svg viewBox="0 0 32 24" className="w-8 h-6" fill="none" stroke="#dfdbd2">
        <circle cx="16" cy="12" r="7.5" strokeWidth="2" strokeDasharray="3 0.5" />
        <path d="M11 16l10-8" strokeWidth="3" stroke="#a8a59c" />
      </svg>
      <svg viewBox="0 0 32 24" className="w-8 h-6" fill="none" stroke="#dfdbd2" strokeWidth="1.5">
        <path d="M11 6h13v13H11ZM13 4v3M16 4v3M19 4v3M22 4v3M8 9h3M8 12h3M8 15h3M8 18h3" />
        <path d="M13 14h9M13 17h9" stroke="#9fc4c8" />
      </svg>
      <svg viewBox="0 0 32 24" className="w-8 h-6" fill="none" stroke="#dfdbd2" strokeWidth="1.8">
        <path d="M7 10c5-4.5 13-4.5 18 0" stroke="#8f8c84" />
        <path d="M9.5 13c4-3.5 9-3.5 13 0M12.5 16c2-2 5-2 7 0" />
        <path d="M14.5 18h3L16 20Z" fill="#dfdbd2" stroke="none" />
      </svg>
      <span className="w-8 flex justify-center">
        <b className="w-5 h-5 rounded-xs bg-[#dfdbd2] text-[#4a4944] text-[13px] leading-5 text-center font-semibold">Cs</b>
      </span>
      <svg viewBox="0 0 20 24" className="w-5 h-6" fill="none" stroke="#dfdbd2" strokeWidth="1.4">
        <path d="M6 8l8 8-4 3.500V4.500L14 8l-8 8" />
      </svg>
      <svg viewBox="0 0 34 24" className="w-[34px] h-6">
        <rect x="8" y="6" width="18" height="12" fill="#1fb0ea" />
        <path d="M9 7l8 6 8-6M9 17l5.5-5M25 17l-5.5-5" stroke="#222" fill="none" strokeWidth="1.2" />
      </svg>
      <svg viewBox="0 0 34 24" className="w-[34px] h-6">
        <rect x="6.5" y="6.5" width="21" height="11" rx="1.5" fill="none" stroke="#dfdbd2" strokeWidth="1.4" />
        <path d="M28.5 9.5v5" stroke="#dfdbd2" strokeWidth="1.6" />
        <rect x="8.5" y="8.5" width="17" height="7" fill="#98958c" />
        <path d="M11 12l6-3v2l3-2 4 4-5-1v2Z" fill="#fff" />
      </svg>
      <span className="w-12 text-center">(100%)</span>
      <svg viewBox="0 0 36 24" className="w-9 h-6" fill="#86837a">
        <path d="M10 9.5h3l4-3.5v12l-4-3.5h-3Z" />
        <path d="M21 9.5l5 5M26 9.5l-5 5" stroke="#86837a" strokeWidth="1.6" />
      </svg>
      <span className="w-[114px] text-center">Pá,  1. čec 19:39</span>
      <svg viewBox="0 0 32 24" className="w-8 h-6" fill="none" stroke="#dfdbd2">
        <path d="M19.5 8a5.5 5.5 0 1 1-7 0M16 5v7" strokeWidth="2.2" />
        <path d="M8 12h2M22 12h2M10 6.5l1.5 1.5M22 6.5L20.5 8M10 18l1.5-1.5M22 18l-1.5-1.5M16 18v2.5" strokeWidth="2.4" />
      </svg>
    </div>
  </header>
);

const gray = "bg-linear-to-b from-[#858585] to-[#4f4f4f]";
const chromium = (
  <g>
    <circle cx="16" cy="16" r="11" fill="#6d9fd6" />
    <path d="M16 5a11 11 0 0 1 10 6H16Z" fill="#a9c8ea" />
    <path d="M6 12l6 9 3 6C8 26 4 19 6 12Z" fill="#c9dcf2" />
    <circle cx="16" cy="16" r="5" fill="#3f78bd" stroke="#e6f0fa" strokeWidth="1.5" />
  </g>
);

const launchers = [
  {
    name: "Dash", bg: "bg-[#1c1c1c]",
    art: (
      <g fill="none">
        <path d="M6 22C4 12 10 4 20 5M26 9c3 9-2 18-11 19" stroke="#777" strokeWidth="4" />
        <circle cx="16" cy="16" r="9" fill="#fff" />
        <circle cx="16" cy="16" r="4.5" stroke="#222" strokeWidth="2.2" strokeDasharray="7.5 1.9" />
        <g fill="#222"><circle cx="9.5" cy="16" r="1.5" /><circle cx="19" cy="10.5" r="1.5" /><circle cx="19" cy="21.5" r="1.5" /></g>
      </g>
    ),
  },
  {
    name: "Terminal", bg: "bg-linear-to-b from-[#c4c4c4] to-[#8f8f8f]",
    art: (
      <g>
        <rect x="4" y="7" width="24" height="19" rx="1" fill="#2a2d2f" stroke="#e8e8e8" strokeWidth="1.5" />
        <path d="M8 12l3 2.500L8 17M13 17h4" stroke="#fff" strokeWidth="1.3" fill="none" />
      </g>
    ),
  },
  {
    name: "Files", bg: gray,
    art: (
      <g>
        <rect x="5" y="7" width="22" height="20" rx="2" fill="#d2cfca" />
        <path d="M7 8h18v5H7Z" fill="#7a3a1a" /><path d="M7 9.5h18v2H7Z" fill="#f08040" />
        <path d="M5 14h22" stroke="#999" /><rect x="12" y="18" width="8" height="5" fill="#eee" stroke="#777" />
      </g>
    ),
  },
  {
    name: "Settings", bg: gray,
    art: (
      <g>
        <circle cx="16" cy="16" r="9" fill="#dcdcdc" stroke="#dcdcdc" strokeWidth="4" strokeDasharray="4 3" />
        <circle cx="16" cy="16" r="4" fill="#6a6a6a" />
        <path d="M7 25l12-12" stroke="#d02424" strokeWidth="5" strokeLinecap="round" />
        <path d="M18 14l3-6 3 1-1 3 3 1-1 3-5 1" fill="#e8e8e8" />
      </g>
    ),
  },
  { name: "Chromium", bg: gray, art: chromium },
  {
    name: "Firefox", bg: gray,
    art: (
      <g>
        <circle cx="16" cy="16" r="11" fill="#e8601c" />
        <circle cx="17" cy="14" r="8" fill="#2f5fa8" />
        <path d="M5 12c2-4 5-6 7-5l1 4c4 0 4 3 1 4 0 4 5 6 10 3-2 6-15 8-18 1Z" fill="#f58a1c" />
        <path d="M25 8c3 6 2 13-4 17 4-5 5-10 4-17Z" fill="#fcc13a" />
      </g>
    ),
  },
  {
    name: "GIMP", bg: gray,
    art: (
      <g>
        <path d="M4 12c5-1 8 2 12-1 4-2 8-4 10-3 2 6-1 14-8 15-6 1-13-4-14-11Z" fill="#5b5547" />
        <circle cx="7" cy="15" r="3" fill="#ddd" /><circle cx="14" cy="14" r="3" fill="#ddd" />
        <circle cx="8" cy="15.5" r="1.7" fill="#111" /><circle cx="14" cy="15" r="1.7" fill="#111" />
        <path d="M14 20l13 3" stroke="#d08a2a" strokeWidth="2" />
      </g>
    ),
  },
  {
    name: "Marble", bg: gray,
    art: (
      <g>
        <circle cx="16" cy="14" r="10" fill="#8db3dd" stroke="#dbe6f2" />
        <path d="M8 11c4-5 8-3 8 0s-4 3-4 5-4-1-4-5ZM19 8l5 3-3 5-3-3Z" fill="#f4f4f4" />
        <circle cx="21" cy="19" r="5" fill="none" stroke="#c9c9c9" strokeWidth="3" strokeDasharray="2.5 1.5" />
        <path d="M16 20v7" stroke="#ddd" strokeWidth="2" />
      </g>
    ),
  },
  {
    name: "System Monitor", bg: gray,
    art: (
      <g>
        <rect x="5" y="5" width="22" height="22" fill="#2f8fe8" stroke="#dcebfa" strokeWidth="2" />
        <path d="M6 19h4l2-8 3 11 3-13 3 12 2-6h3" stroke="#fff" strokeWidth="1.6" fill="none" />
      </g>
    ),
  },
  {
    name: "Pidgin", bg: "bg-linear-to-b from-[#c050b8] to-[#93258c]",
    art: (
      <g>
        <path d="M16 4h12v12h-5l-4 4v-5Z" fill="#e8eef5" />
        <path d="M6 31c0-5 2-7 1-12 0-6 11-7 12 0 0 4 4 7 4 12Z" fill="#7a5a94" />
        <circle cx="11" cy="16" r="2" fill="#fff" /><circle cx="16" cy="16" r="2" fill="#fff" />
        <path d="M11 19h6l-3 4Z" fill="#f0943a" />
        <circle cx="25" cy="6" r="5" fill="#333" stroke="#ddd" />
        <text x="22.5" y="9" fontSize="8" fontWeight="700" fontFamily="Liberation Sans, sans-serif" fill="#fff">2</text>
      </g>
    ),
  },
  {
    name: "Vim", bg: "bg-linear-to-b from-[#55b088] to-[#34805d]",
    art: (
      <g>
        <path d="M16 4l12 12-12 12L4 16Z" fill="#1f6a48" />
        <path d="M2 5h11v4h-2l1 9 6-9h-2V5h12v3L13 27H9L5 9H2Z" fill="#d2d2d2" stroke="#333" strokeWidth="0.8" />
        <text x="15" y="26" fontSize="12" fontWeight="700" fontStyle="italic" fontFamily="Liberation Sans, sans-serif" fill="#e4e4e4" stroke="#333" strokeWidth="0.4">im</text>
      </g>
    ),
  },
  { name: "Chromium Web", bg: "bg-linear-to-b from-[#6a9ccc] to-[#3a6a9c]", art: chromium },
  {
    name: "Document Viewer", bg: "bg-linear-to-b from-[#cc5a5a] to-[#9c2a2a]",
    art: (
      <g>
        <rect x="6" y="4" width="21" height="23" rx="2" fill="#f4f4f4" />
        <path d="M10 15c8 0 11-8 6-8-5 1-5 9 1 9 3 0 6-2 7-4" stroke="#d42020" strokeWidth="2" fill="none" />
        <path d="M9 21h15M9 24h10" stroke="#ccc" />
      </g>
    ),
  },
  {
    name: "Draft Editor", bg: "bg-linear-to-b from-[#c29a48] to-[#8a6a24]",
    art: (
      <g fill="none">
        <path d="M9 7h8c14 0 14 17 0 17H8M11 10v14" stroke="#5a5a5a" strokeWidth="2.5" />
        <rect x="7" y="5" width="5" height="5" fill="#8fe06a" />
        <path d="M17 11l5 9H12Z" stroke="#f58a3a" strokeWidth="2" />
      </g>
    ),
  },
  {
    name: "QGIS", bg: "bg-linear-to-b from-[#aecb3f] to-[#74942a]",
    art: (
      <g>
        <ellipse cx="15" cy="16" rx="7" ry="8.5" fill="none" stroke="#fcee4a" strokeWidth="4.5" />
        <path d="M14 21l8 6h3" stroke="#fcee4a" strokeWidth="3" fill="none" />
        <path d="M7 25l9-10-2-2 11-8-2 12-3-1-9 9Z" fill="#1f7a3a" />
      </g>
    ),
  },
  {
    name: "Workspaces", bg: gray,
    art: (
      <g>
        <path d="M2 2h14v14H2Z" fill="#5a2f3f" />
        <path d="M16 3v26M3 16h26" stroke="#a5a5a5" />
        <path d="M6 7h6v4H6ZM9 9h6v4H9Z" fill="none" stroke="#ddd" />
      </g>
    ),
  },
  {
    name: "Disk", bg: gray,
    art: (
      <g>
        <path d="M7 8h18l4 13v4H3v-4Z" fill="#d8d8d8" stroke="#fff" />
        <path d="M3 21h26v4H3Z" fill="#f0f0f0" /><ellipse cx="16" cy="14" rx="8" ry="5" fill="#b8b8b8" stroke="#999" />
      </g>
    ),
  },
];

/* Small marks at the launcher's left edge for the apps that are open */
const running = {
  Terminal: "M0 4h3M0 7h3",
  Vim: "M0 4h3M0 7h3",
  Pidgin: "M0 3l3 3-3 3",
  "Chromium Web": "M0 3l3 3-3 3",
  "Document Viewer": "M0 3l3 3-3 3",
  "Draft Editor": "M0 3l3 3-3 3",
  QGIS: "M0 4l2 2-2 2Z",
};

const Tile = ({ name, bg, art }) => (
  <div className="flex items-center">
    <svg viewBox="0 0 5 12" className="w-[5px] h-3" fill="none" stroke="#cfd4d8">
      {running[name] && <path d={running[name]} />}
    </svg>
    <button aria-label={name} className={`size-8 rounded-sm border border-[#767676] ${bg}`}>
      <svg viewBox="0 0 32 32" className="size-full">{art}</svg>
    </button>
    {name === "QGIS" && (
      <svg viewBox="0 0 4 6" className="ml-px w-1 h-1.5"><path d="M4 0v6L0 3Z" fill="#e8e8e8" /></svg>
    )}
  </div>
);

const Launcher = () => (
  <nav aria-label="Launcher" className="w-[42px] shrink-0 flex flex-col gap-[5px] pt-[5px] pb-1 bg-linear-to-r from-[#3a3c3f] to-[#515356]">
    {launchers.map((l) => (
      <Tile key={l.name} {...l} />
    ))}
    <div className="mt-auto">
      <Tile
        name="Trash"
        bg={gray}
        art={
          <g fill="none" stroke="#d8d8d8" strokeWidth="1.5">
            <path d="M8 7l3 20h10l3-20Z" fill="#8a8a8a" />
            <ellipse cx="16" cy="7" rx="9" ry="2.5" />
            <path d="M11 14l4 2 5-3 2 4-3 4 1 4h-7l-2-5Z" fill="#f4f4f4" />
          </g>
        }
      />
    </div>
  </nav>
);

const Check = ({ label, checked }) => {
  const [on, setOn] = useState(checked);
  return (
    <span className="grid size-4 shrink-0">
      <input
        type="checkbox"
        aria-label={label}
        checked={on}
        onChange={() => setOn(!on)}
        className="[grid-area:1/1] size-[15px] appearance-none rounded-xs border border-[#b8532b] bg-linear-to-b from-[#f58a5c] to-[#e8683a]"
      />
      {on && (
        <svg viewBox="0 0 16 16" className="[grid-area:1/1] size-4 pointer-events-none">
          <path d="M3 7l4 5 8-10" fill="none" stroke="#5a2a18" strokeWidth="2" />
        </svg>
      )}
    </span>
  );
};

const PanelButton = ({ name }) => (
  <button aria-label={name} className="w-7 h-6 flex items-center justify-center">
    <Icon name={name} className="size-4" />
  </button>
);

const LayersPanel = () => (
  <section className="flex flex-col flex-1 min-h-0">
    <div className="flex items-center h-[27px] pl-0.5 pr-2">
      <h2 className="flex-1">Layers Panel</h2>
      <div className="flex gap-[5px]">
        <button aria-label="Float" className="size-3">
          <svg viewBox="0 0 12 12" fill="none" stroke="#5a5a5a"><rect x="0.5" y="0.5" width="11" height="11" rx="1.5" /><path d="M5.5 2.5h4v4h-4ZM2.5 5.5h4v4h-4Z" /></svg>
        </button>
        <button aria-label="Close" className="size-3">
          <svg viewBox="0 0 12 12" fill="none" stroke="#5a5a5a"><rect x="0.5" y="0.5" width="11" height="11" rx="1.5" /><path d="M3.5 3.5l5 5M8.5 3.5l-5 5" strokeWidth="2" /></svg>
        </button>
      </div>
    </div>
    <div className="flex items-center h-7 pl-0.5">
      <PanelButton name="addGroup" />
      <button aria-label="Visibility" className="w-[34px] h-6 flex items-center justify-center">
        <Icon name="eye" className="size-4" />
        <Arrow className="text-[#7a7a7a]" />
      </button>
      <PanelButton name="funnel" />
      <PanelButton name="epsilonFilter" />
      <button aria-label="Filter options" className="w-5 h-6 flex items-center justify-center"><Arrow className="text-[#b0b0b0]" /></button>
      <PanelButton name="expandAll" />
      <PanelButton name="collapseAll" />
      <PanelButton name="removeLayer" />
    </div>
    <ul className="flex-1 mt-2 mr-1 pt-px border border-[#b6b3af] bg-white overflow-hidden">
      <li className="flex items-center h-[22px] pl-2">
        <Arrow className="text-[#5a5a5a]" />
        <span className="ml-2.5 mr-1.5"><Check label="Ortophoto" checked /></span>
        <Icon name="group" className="size-4" />
        <span className="ml-[7px]">Ortophoto</span>
      </li>
      {layers.map((n) => (
        <li
          key={n}
          className={
            n === "38"
              ? "flex items-center h-[22px] pl-[46px] bg-linear-to-b from-[#e9e8e7] to-[#d6d5d3] border-t border-[#d0cecc] text-[#222]"
              : "flex items-center h-[22px] pl-[46px] text-[#3c3c3c]"
          }
        >
          <Check label={`ORTO24.2004.TANV${n}`} checked />
          <span className="mx-1.5"><Icon name={n === "38" ? "rasterSelected" : "rasterLayer"} className="size-4" /></span>
          <b className={n === "38" ? "text-[15px] border-b border-[#222] leading-[18px]" : "text-[15px] leading-[18px]"}>ORTO24.2004.TANV{n}</b>
        </li>
      ))}
    </ul>
  </section>
);

const BrowserPanel = () => (
  <section className="h-[220px] flex flex-col">
    <h2 className="h-6 leading-6 pl-0.5">Browser Panel</h2>
    <div className="flex items-center h-8 pl-0.5">
      <PanelButton name="addLayer" />
      <PanelButton name="refresh" />
      <PanelButton name="funnel" />
      <PanelButton name="collapseAll" />
      <PanelButton name="info" />
    </div>
    <ul className="flex-1 mt-1.5 mr-1 border border-[#b6b3af] bg-white overflow-hidden whitespace-nowrap">
      {[0, 1, 2, 3, 4].map((i) => (
        <li
          key={i}
          className={
            i === 0
              ? "flex items-center h-[19px] pl-[163px] gap-1.5"
              : "flex items-center h-[19px] pl-[163px] gap-1.5 bg-linear-to-b from-[#e9e8e7] to-[#d6d5d3]"
          }
        >
          <Icon name={i === 0 ? "rasterLayer" : "rasterSelected"} className="size-4" />
          ORTO24.2004.TANV
        </li>
      ))}
      <li className="flex items-center h-[19px] pl-[128px] gap-1.5">
        <span className="-rotate-90 flex"><Arrow className="text-[#5a5a5a]" /></span>
        <Icon name="browserFolder" className="size-4" />
        TRES
      </li>
      {["DMR 5G_txt(JTSK)", "INSPIRE(HY)_gml(ETRF89)"].map((t) => (
        <li key={t} className="flex items-center h-[19px] pl-[88px] gap-1.5">
          <span className="-rotate-90 flex"><Arrow className="text-[#5a5a5a]" /></span>
          <Icon name="browserFolder" className="size-4" />
          {t}
        </li>
      ))}
    </ul>
    <div className="flex h-3 mt-[3px] mb-px mr-1 rounded-full border border-[#a8a5a1] bg-[#dedcda]">
      <span className="w-3 flex items-center justify-center">
        <svg viewBox="0 0 4 6" className="w-1 h-1.5"><path d="M4 0v6L0 3Z" fill="#8a8a8a" /></svg>
      </span>
      <span className="w-[255px] rounded-full border border-[#a09d99] bg-linear-to-b from-white to-[#e8e6e4] flex items-center justify-center">
        <Grip vertical />
      </span>
    </div>
  </section>
);

const StatusBar = () => (
  <footer className="h-8 flex items-center border-t border-[#cfccc9] pl-[7px] pr-3 text-[#4c4c4c]">
    <p>1 legend entries removed.</p>
    <form className="ml-auto flex items-center">
      <label htmlFor="coord" className="w-20">Coordinate</label>
      <input id="coord" defaultValue="531313,5625905" className="w-[183px] h-[26px] text-center border border-[#a8a5a1] rounded-sm bg-[#f7f7f6]" />
      <button type="button" aria-label="Toggle extents" className="mx-0.5 w-5 h-6 rounded-sm border border-[#a8a5a1] flex items-center justify-center">
        <svg viewBox="0 0 16 16" className="size-4" fill="none" stroke="#333" strokeWidth="1.5"><circle cx="8" cy="9" r="5" /><path d="M3 2l10 11M8 9l4-5M5 10h6" /></svg>
      </button>
      <label htmlFor="scale" className="w-[53px] pl-[7px]">Scale</label>
      <span className="grid w-[116px] h-[26px]">
        <select id="scale" className="[grid-area:1/1] appearance-none pl-1.5 border border-[#a8a5a1] rounded-sm bg-[#f7f7f6]">
          <option>1:12 663</option>
        </select>
        <span className="[grid-area:1/1] justify-self-end w-6 border-l border-[#b6b3af] flex items-center justify-center pointer-events-none"><Arrow className="text-[#6a6a6a]" /></span>
      </span>
      <label htmlFor="rotation" className="w-[78px] pl-2">Rotation</label>
      <input id="rotation" defaultValue="0,0" className="w-[94px] h-[26px] pl-1 border border-[#a8a5a1] rounded-l-sm bg-[#f7f7f6]" />
      <button type="button" aria-label="Step rotation" className="w-4 h-[26px] border border-l-0 border-[#b6b3af] rounded-r-sm flex items-end justify-center pb-1"><Arrow className="text-[#6a6a6a]" /></button>
      <span className="ml-2 mr-[7px] flex"><Check label="Render" checked /></span>
      <span className="w-[66px]">Render</span>
      <button type="button" className="flex items-center gap-1 text-[15px]">
        <svg viewBox="0 0 16 16" className="size-4" fill="none" stroke="#333" strokeWidth="1.6"><circle cx="8" cy="8" r="6.5" fill="#888" /><path d="M1 8h14M8 1v14M4 2c-2 4-2 8 0 12M12 2c2 4 2 8 0 12" /></svg>
        EPSG:32633 (OTF)
      </button>
      <button type="button" aria-label="Messages" className="ml-[17px]">
        <svg viewBox="0 0 18 18" className="size-[18px]"><path d="M9 1c11 0 11 12 3 12.500L14 17l-5-3.500C-2 13-2 1 9 1Z" fill="#555" /><path d="M5 7.5h1.5M8.3 7.5h1.5M11.5 7.500H13" stroke="#fff" strokeWidth="1.6" /></svg>
      </button>
    </form>
  </footer>
);

/* Layer properties dialog */

const tabs = [
  ["General", "general"],
  ["Style", "style"],
  ["Transparency", "transparency"],
  ["Pyramids", "pyramids"],
  ["Histogram", "histogram"],
  ["Metadata", "metadata"],
];

const GroupTitle = ({ children }) => (
  <h3 className="flex items-center gap-2 h-[26px] font-bold text-[#3c3c3c]">
    <svg viewBox="0 0 12 8" className="w-3 h-2" aria-hidden="true"><path d="M0.5 0.5h11L6 7.5Z" fill="#3c3c3c" /></svg>
    {children}
  </h3>
);

const pushButton = "w-[83px] h-[26px] rounded-sm border border-[#b0ada9] bg-linear-to-b from-white to-[#e8e7e5] flex items-center justify-center";

const LayerProperties = () => {
  const [tab, setTab] = useState("Transparency");
  return (
    <div
      role="dialog"
      aria-labelledby="dialog-title"
      className="absolute left-[418px] right-[97px] top-[187px] bottom-[18px] flex flex-col rounded-t-md shadow-[0_6px_44px_4px_rgba(0,0,0,0.65)]"
    >
      <div className="h-7 shrink-0 flex items-center pl-[7px] rounded-t-md bg-linear-to-b from-[#5b594f] to-[#3f3e39]">
        <div className="flex gap-[3px]">
          <WinButton kind="close" tone="red" />
          <WinButton kind="maximize" tone="mid" />
        </div>
        <h2 id="dialog-title" className="pl-3 font-bold text-[15px] text-[#dfdbd2]">Layer Properties - ORTO24.2004.TANV38 | Transparency</h2>
      </div>
      <div className="flex flex-1 min-h-0 bg-[#f2f1f0]">
        <div role="tablist" aria-orientation="vertical" className="w-[150px] shrink-0 bg-[#5d5d5d]">
          {tabs.map(([name, icon]) => (
            <button
              key={name}
              role="tab"
              aria-selected={tab === name}
              onClick={() => setTab(name)}
              className={
                tab === name
                  ? "flex items-center gap-[7px] w-full h-9 pt-0.5 pl-[7px] bg-[#f2f1f0] text-black"
                  : "flex items-center gap-2 w-full h-9 pt-0.5 pl-[5px] text-white"
              }
            >
              <Icon name={icon} className={tab === name ? "size-[26px]" : "size-6"} />
              {name}
            </button>
          ))}
        </div>
        <div className="w-[7px] shrink-0 flex items-center justify-center"><Grip /></div>
        <div className="flex-1 min-w-0 flex flex-col pr-1">
          <div className="flex pl-2.5 pr-[18px]">
            <section className="flex-1">
              <GroupTitle>Global transparency</GroupTitle>
              <div className="pl-[15px]">
                <div className="pl-0.5 pr-0.5">
                  <input
                    type="range"
                    aria-label="Global transparency"
                    defaultValue="0"
                    className="block w-full h-[31px] appearance-none bg-transparent [&::-webkit-slider-runnable-track]:h-[5px] [&::-webkit-slider-runnable-track]:rounded-full [&::-webkit-slider-runnable-track]:border-t [&::-webkit-slider-runnable-track]:border-[#b0ada9] [&::-webkit-slider-runnable-track]:bg-[#e2e0de] [&::-webkit-slider-thumb]:appearance-none [&::-webkit-slider-thumb]:w-[13px] [&::-webkit-slider-thumb]:h-[19px] [&::-webkit-slider-thumb]:-mt-2 [&::-webkit-slider-thumb]:rounded-t-[5px] [&::-webkit-slider-thumb]:rounded-b-[6px] [&::-webkit-slider-thumb]:border [&::-webkit-slider-thumb]:border-[#9a9793] [&::-webkit-slider-thumb]:bg-[#f4f3f2]"
                  />
                </div>
                <div className="flex justify-between h-8 items-center">
                  <span>None</span>
                  <span>0%</span>
                  <span>Full</span>
                </div>
              </div>
            </section>
            <section className="w-[439px] ml-[17px]">
              <GroupTitle>No data value</GroupTitle>
              <label className="flex items-center gap-2 h-[25px] pl-[19px] text-[#a5a29e]">
                <input type="checkbox" disabled className="appearance-none size-3.5 rounded-xs border border-[#c0bdb9] bg-[#dfdddb]" />
                No data value:
                <span className="pl-1">not defined</span>
              </label>
              <div className="flex items-center h-9 pl-[15px]">
                <label htmlFor="nodata" className="w-[174px] whitespace-nowrap">Additional no data value</label>
                <input id="nodata" className="flex-1 min-w-0 h-[25px] px-1 rounded-sm border border-[#b0ada9] bg-white" />
              </div>
            </section>
          </div>
          <section className="flex-1 min-h-0 flex flex-col pl-2.5 pr-[18px] pt-2">
            <GroupTitle>Custom transparency options</GroupTitle>
            <div className="flex items-center h-7 pl-[15px] pr-7 mt-0.5">
              <label htmlFor="band" className="w-[135px] whitespace-nowrap">Transparency band</label>
              <span className="grid flex-1 h-[26px]">
                <select id="band" className="[grid-area:1/1] appearance-none pl-1 rounded-sm border border-[#b0ada9] bg-linear-to-b from-white to-[#e8e7e5]">
                  <option>None</option>
                </select>
                <svg viewBox="0 0 8 14" className="[grid-area:1/1] justify-self-end self-center w-2 h-3.5 mr-1.5 pointer-events-none"><path d="M1.5 4h5L4 1ZM1.5 10h5L4 13Z" fill="#5a5a5a" /></svg>
              </span>
            </div>
            <p className="h-7 leading-7 pl-[15px]">Transparent pixel list</p>
            <div className="flex-1 min-h-0 flex gap-[7px] pl-[15px]">
              <div className="flex-1 border border-[#b6b3af] bg-white">
                <table className="w-full table-fixed border-collapse">
                  <thead>
                    <tr className="h-[25px] bg-linear-to-b from-white to-[#edecea] border-b border-[#a8a5a1]">
                      <th className="w-[57px] font-normal border-r border-[#d0cecb]">Red</th>
                      <th className="w-[57px] font-normal border-r border-[#d0cecb]">Green</th>
                      <th className="w-[57px] font-normal border-r border-[#d0cecb]">Blue</th>
                      <th className="font-normal">Percent Transparent</th>
                    </tr>
                  </thead>
                  <tbody />
                </table>
              </div>
              <div className="flex flex-col gap-2 pt-[7px]">
                {["addRow", "pickRow", "removeRow", "defaultRows", "open", "save"].map((n) => (
                  <button key={n} aria-label={n} className="w-5 h-[22px] rounded-sm border border-[#b0ada9] bg-linear-to-b from-white to-[#eeedec] flex items-center justify-center">
                    <Icon name={n} className="size-3.5" />
                  </button>
                ))}
              </div>
            </div>
          </section>
          <div className="flex items-center gap-2 mt-[18px] mb-[3px]">
            <button className={pushButton}>Help</button>
            <button className={`${pushButton} gap-5 pl-2`}>Style <Arrow className="text-[#6a6a6a]" /></button>
            <span className="flex-1" />
            <button className={pushButton}>Apply</button>
            <button className={pushButton}><u className="underline-offset-2">C</u>ancel</button>
            <button className="w-[83px] h-[26px] rounded-sm border border-[#b8744f] bg-linear-to-b from-[#fbab8a] to-[#f58c62] flex items-center justify-center">
              <u className="underline-offset-2">O</u>K
            </button>
          </div>
        </div>
      </div>
    </div>
  );
};

const App = () => (
  <div className="relative h-screen min-h-[700px] overflow-hidden flex flex-col bg-[#f2f1f0] font-['Noto_Sans','Open_Sans',sans-serif] text-[14px] leading-5 text-[#4c4c4c]">
    <TopBar />
    <div className="flex flex-1 min-h-0">
      <Launcher />
      <main className="flex-1 min-w-0 flex flex-col">
        <ToolBar items={fileBar} height="h-[41px]" />
        <ToolBar items={labelBar} />
        <ToolBar items={editBar} height="h-[39px]" />
        <div className="flex flex-1 min-h-0">
          <div role="toolbar" className="w-[61px] shrink-0 flex flex-col items-center pt-[5px]">
            <Grip vertical />
            <div className="h-0.5" />
            {layerBar.map((n) => (
              <button key={n} aria-label={n} className="size-9 flex items-center justify-center"><Icon name={n} /></button>
            ))}
            <div className="flex w-full h-9 items-center justify-between pl-[9px] pr-2">
              <button aria-label="newVector"><Icon name="newVector" /></button>
              <button aria-label="More"><Arrow className="text-[#7a7a7a]" /></button>
            </div>
            <div className="pt-[5px] pb-1"><Grip vertical /></div>
            <button aria-label="topology" className="size-9 flex items-center justify-center"><Icon name="topology" /></button>
          </div>
          <div className="w-[373px] shrink-0 flex flex-col">
            <LayersPanel />
            <div className="h-[7px] flex items-center justify-center"><Grip vertical /></div>
            <BrowserPanel />
          </div>
          <div className="flex-1 border border-[#b6b3af] bg-white flex items-end justify-end">
            <div className="h-[114px] w-[300px] mr-[76px] bg-black" />
          </div>
        </div>
        <StatusBar />
      </main>
    </div>
    <LayerProperties />
  </div>
);

export default App;
